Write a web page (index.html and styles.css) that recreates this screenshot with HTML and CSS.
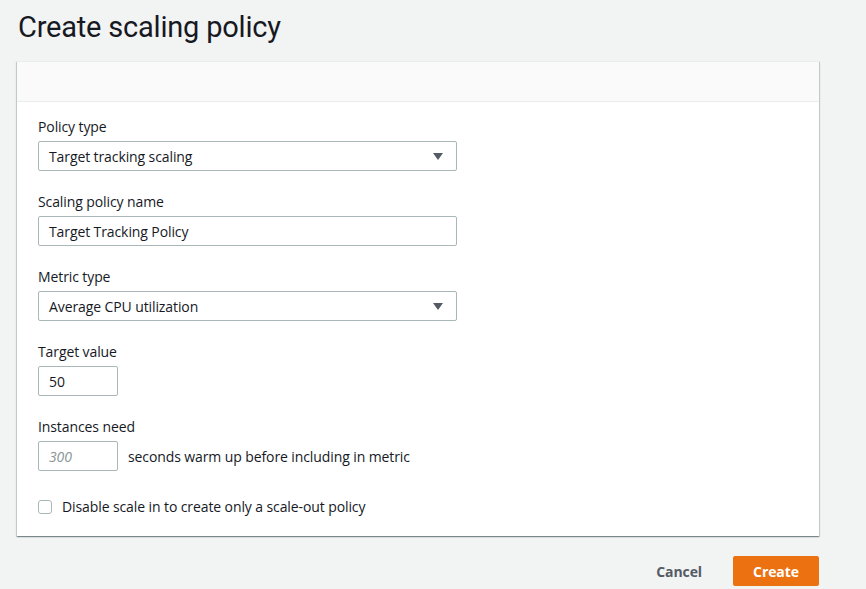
FILE: index.html
```html
<!DOCTYPE html>
<html>
<head>
<meta charset="utf-8">
<link rel="stylesheet" href="styles.css">
</head>
<body>
<div class="page">
  <h1 class="title">Create scaling policy</h1>
  <div class="card">
    <div class="card-header"></div>
    <div class="card-body">
      <div class="field">
        <div class="label">Policy type</div>
        <div class="control select">
          <span>Target tracking scaling</span>
          <svg class="caret" width="10" height="7" viewBox="0 0 10 7"><path d="M0 0h10L5 7z" fill="#545b64"/></svg>
        </div>
      </div>
      <div class="field">
        <div class="label">Scaling policy name</div>
        <div class="control"><span>Target Tracking Policy</span></div>
      </div>
      <div class="field">
        <div class="label">Metric type</div>
        <div class="control select">
          <span>Average CPU utilization</span>
          <svg class="caret" width="10" height="7" viewBox="0 0 10 7"><path d="M0 0h10L5 7z" fill="#545b64"/></svg>
        </div>
      </div>
      <div class="field">
        <div class="label">Target value</div>
        <div class="control small"><span>50</span></div>
      </div>
      <div class="field">
        <div class="label">Instances need</div>
        <div class="inline">
          <div class="control small"><span class="placeholder">300</span></div>
          <span class="suffix">seconds warm up before including in metric</span>
        </div>
      </div>
      <div class="check-row">
        <span class="checkbox"></span>
        <span>Disable scale in to create only a scale-out policy</span>
      </div>
    </div>
  </div>
  <div class="actions">
    <span class="btn-link">Cancel</span>
    <span class="btn-primary">Create</span>
  </div>
</div>
</body>
</html>
```
FILE: styles.css
```css
* { box-sizing: border-box; }
html, body { margin: 0; padding: 0; }
body {
  background: #f2f3f3;
  font-family: "Open Sans", "Noto Sans", sans-serif;
  color: #16191f;
  font-size: 14px;
  letter-spacing: -0.1px;
}
.page {
  padding: 0 47px 0 17px;
  display: flex;
  flex-direction: column;
}
.title {
  margin: 10px 0 0 1px;
  font-size: 29px;
  font-weight: 400;
  line-height: 34px;
  height: 51px;
  letter-spacing: -0.2px;
  font-family: "Roboto", "Open Sans", sans-serif;
}
.card {
  background: #fff;
  box-shadow: 0 1px 1px 0 rgba(0,28,36,.3), 1px 1px 1px 0 rgba(0,28,36,.15), -1px 1px 1px 0 rgba(0,28,36,.15);
  border-top: 1px solid #eaeded;
}
.card-header {
  height: 40px;
  background: #fafafa;
  border-bottom: 1px solid #eaeded;
}
.card-body {
  padding: 14px 20px 18px 21px;
  display: flex;
  flex-direction: column;
  gap: 20px;
}
.field { display: flex; flex-direction: column; gap: 3px; }
.label { line-height: 22px; height: 22px; }
.control {
  width: 419px;
  height: 30px;
  border: 1px solid #aab7b8;
  border-radius: 2px;
  display: flex;
  align-items: center;
  justify-content: space-between;
  padding: 0 13px 0 10px;
  background: #fff;
}
.control.small { width: 80px; }
.caret { display: block; }
.inline { display: flex; align-items: center; gap: 10px; }
.placeholder { color: #879596; font-style: italic; }
.check-row {
  display: flex;
  align-items: center;
  gap: 10px;
  margin-top: 5px;
  line-height: 22px;
}
.checkbox {
  width: 14px;
  height: 14px;
  border: 1px solid #aab7b8;
  border-radius: 3px;
  background: #fff;
}
.actions {
  display: flex;
  justify-content: flex-end;
  align-items: center;
  gap: 31px;
  margin-top: 20px;
}
.btn-link {
  font-weight: 700;
  color: #545b64;
}
.btn-primary {
  background: #ec7211;
  color: #fff;
  font-weight: 700;
  border-radius: 2px;
  width: 86px;
  height: 30px;
  display: flex;
  align-items: center;
  justify-content: center;
}
```
